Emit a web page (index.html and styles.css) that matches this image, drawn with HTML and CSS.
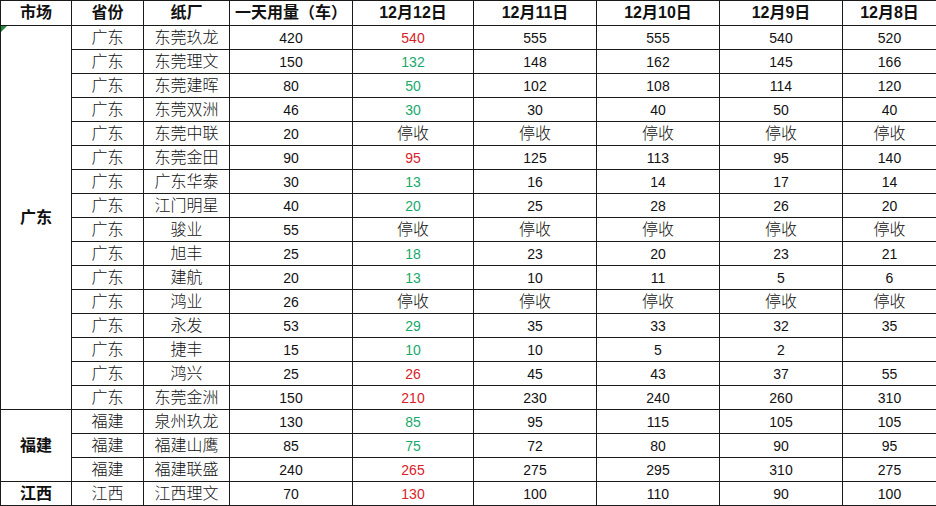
FILE: index.html
```html
<!DOCTYPE html>
<html lang="zh-CN">
<head>
<meta charset="utf-8">
<title>纸厂用量</title>
<link rel="stylesheet" href="styles.css">
</head>
<body>
<table class="sheet">
<colgroup>
<col class="c-mkt"><col class="c-prov"><col class="c-mill"><col class="c-use">
<col class="c-d12"><col class="c-d11"><col class="c-d10"><col class="c-d9"><col class="c-d8">
</colgroup>
<thead>
<tr class="head"><th>市场</th><th>省份</th><th>纸厂</th><th>一天用量（车）</th><th>12月12日</th><th>12月11日</th><th>12月10日</th><th>12月9日</th><th>12月8日</th></tr>
</thead>
<tbody>
<tr><td class="mkt flag" rowspan="16">广东</td><td>广东</td><td>东莞玖龙</td><td class="n">420</td><td class="n up">540</td><td class="n">555</td><td class="n">555</td><td class="n">540</td><td class="n">520</td></tr>
<tr><td>广东</td><td>东莞理文</td><td class="n">150</td><td class="n dn">132</td><td class="n">148</td><td class="n">162</td><td class="n">145</td><td class="n">166</td></tr>
<tr><td>广东</td><td>东莞建晖</td><td class="n">80</td><td class="n dn">50</td><td class="n">102</td><td class="n">108</td><td class="n">114</td><td class="n">120</td></tr>
<tr><td>广东</td><td>东莞双洲</td><td class="n">46</td><td class="n dn">30</td><td class="n">30</td><td class="n">40</td><td class="n">50</td><td class="n">40</td></tr>
<tr><td>广东</td><td>东莞中联</td><td class="n">20</td><td>停收</td><td>停收</td><td>停收</td><td>停收</td><td>停收</td></tr>
<tr><td>广东</td><td>东莞金田</td><td class="n">90</td><td class="n up">95</td><td class="n">125</td><td class="n">113</td><td class="n">95</td><td class="n">140</td></tr>
<tr><td>广东</td><td>广东华泰</td><td class="n">30</td><td class="n dn">13</td><td class="n">16</td><td class="n">14</td><td class="n">17</td><td class="n">14</td></tr>
<tr><td>广东</td><td>江门明星</td><td class="n">40</td><td class="n dn">20</td><td class="n">25</td><td class="n">28</td><td class="n">26</td><td class="n">20</td></tr>
<tr><td>广东</td><td>骏业</td><td class="n">55</td><td>停收</td><td>停收</td><td>停收</td><td>停收</td><td>停收</td></tr>
<tr><td>广东</td><td>旭丰</td><td class="n">25</td><td class="n dn">18</td><td class="n">23</td><td class="n">20</td><td class="n">23</td><td class="n">21</td></tr>
<tr><td>广东</td><td>建航</td><td class="n">20</td><td class="n dn">13</td><td class="n">10</td><td class="n">11</td><td class="n">5</td><td class="n">6</td></tr>
<tr><td>广东</td><td>鸿业</td><td class="n">26</td><td>停收</td><td>停收</td><td>停收</td><td>停收</td><td>停收</td></tr>
<tr><td>广东</td><td>永发</td><td class="n">53</td><td class="n dn">29</td><td class="n">35</td><td class="n">33</td><td class="n">32</td><td class="n">35</td></tr>
<tr><td>广东</td><td>捷丰</td><td class="n">15</td><td class="n dn">10</td><td class="n">10</td><td class="n">5</td><td class="n">2</td><td class="n"></td></tr>
<tr><td>广东</td><td>鸿兴</td><td class="n">25</td><td class="n up">26</td><td class="n">45</td><td class="n">43</td><td class="n">37</td><td class="n">55</td></tr>
<tr><td>广东</td><td>东莞金洲</td><td class="n">150</td><td class="n up">210</td><td class="n">230</td><td class="n">240</td><td class="n">260</td><td class="n">310</td></tr>
<tr><td class="mkt" rowspan="3">福建</td><td>福建</td><td>泉州玖龙</td><td class="n">130</td><td class="n dn">85</td><td class="n">95</td><td class="n">115</td><td class="n">105</td><td class="n">105</td></tr>
<tr><td>福建</td><td>福建山鹰</td><td class="n">85</td><td class="n dn">75</td><td class="n">72</td><td class="n">80</td><td class="n">90</td><td class="n">95</td></tr>
<tr><td>福建</td><td>福建联盛</td><td class="n">240</td><td class="n up">265</td><td class="n">275</td><td class="n">295</td><td class="n">310</td><td class="n">275</td></tr>
<tr><td class="mkt">江西</td><td>江西</td><td>江西理文</td><td class="n">70</td><td class="n up">130</td><td class="n">100</td><td class="n">110</td><td class="n">90</td><td class="n">100</td></tr>
</tbody>
</table>
</body>
</html>
```
FILE: styles.css
```css
html, body {
  margin: 0;
  padding: 0;
  background: #fff;
}
.sheet {
  border-collapse: collapse;
  table-layout: fixed;
  width: 936px;
  font-family: "Liberation Sans", "Noto Sans CJK SC", sans-serif;
  color: #111;
}
.c-mkt { width: 71px; }
.c-prov { width: 72px; }
.c-mill { width: 86px; }
.c-use { width: 123px; }
.c-d12 { width: 121px; }
.c-d11 { width: 123px; }
.c-d10 { width: 123px; }
.c-d9 { width: 123px; }
.c-d8 { width: 94px; }
.sheet th, .sheet td {
  border: 1px solid #1a1a1a;
  padding: 0;
  text-align: center;
  vertical-align: middle;
  overflow: hidden;
  white-space: nowrap;
}
.head th {
  height: 24px;
  font-size: 16px;
  font-weight: bold;
  line-height: 22px;
}
.sheet td {
  height: 23px;
  font-size: 16px;
  line-height: 20px;
  font-weight: 300;
}
.sheet td.n {
  font-size: 14px;
  font-weight: normal;
}
.sheet td.mkt {
  font-weight: bold;
  font-size: 16px;
}
.sheet td.up { color: #d8222a; }
.sheet td.dn { color: #17a86b; }
.flag { position: relative; }
.flag::before {
  content: "";
  position: absolute;
  left: 0;
  top: 0;
  border-top: 6px solid #1e8a3a;
  border-right: 6px solid transparent;
}
```
